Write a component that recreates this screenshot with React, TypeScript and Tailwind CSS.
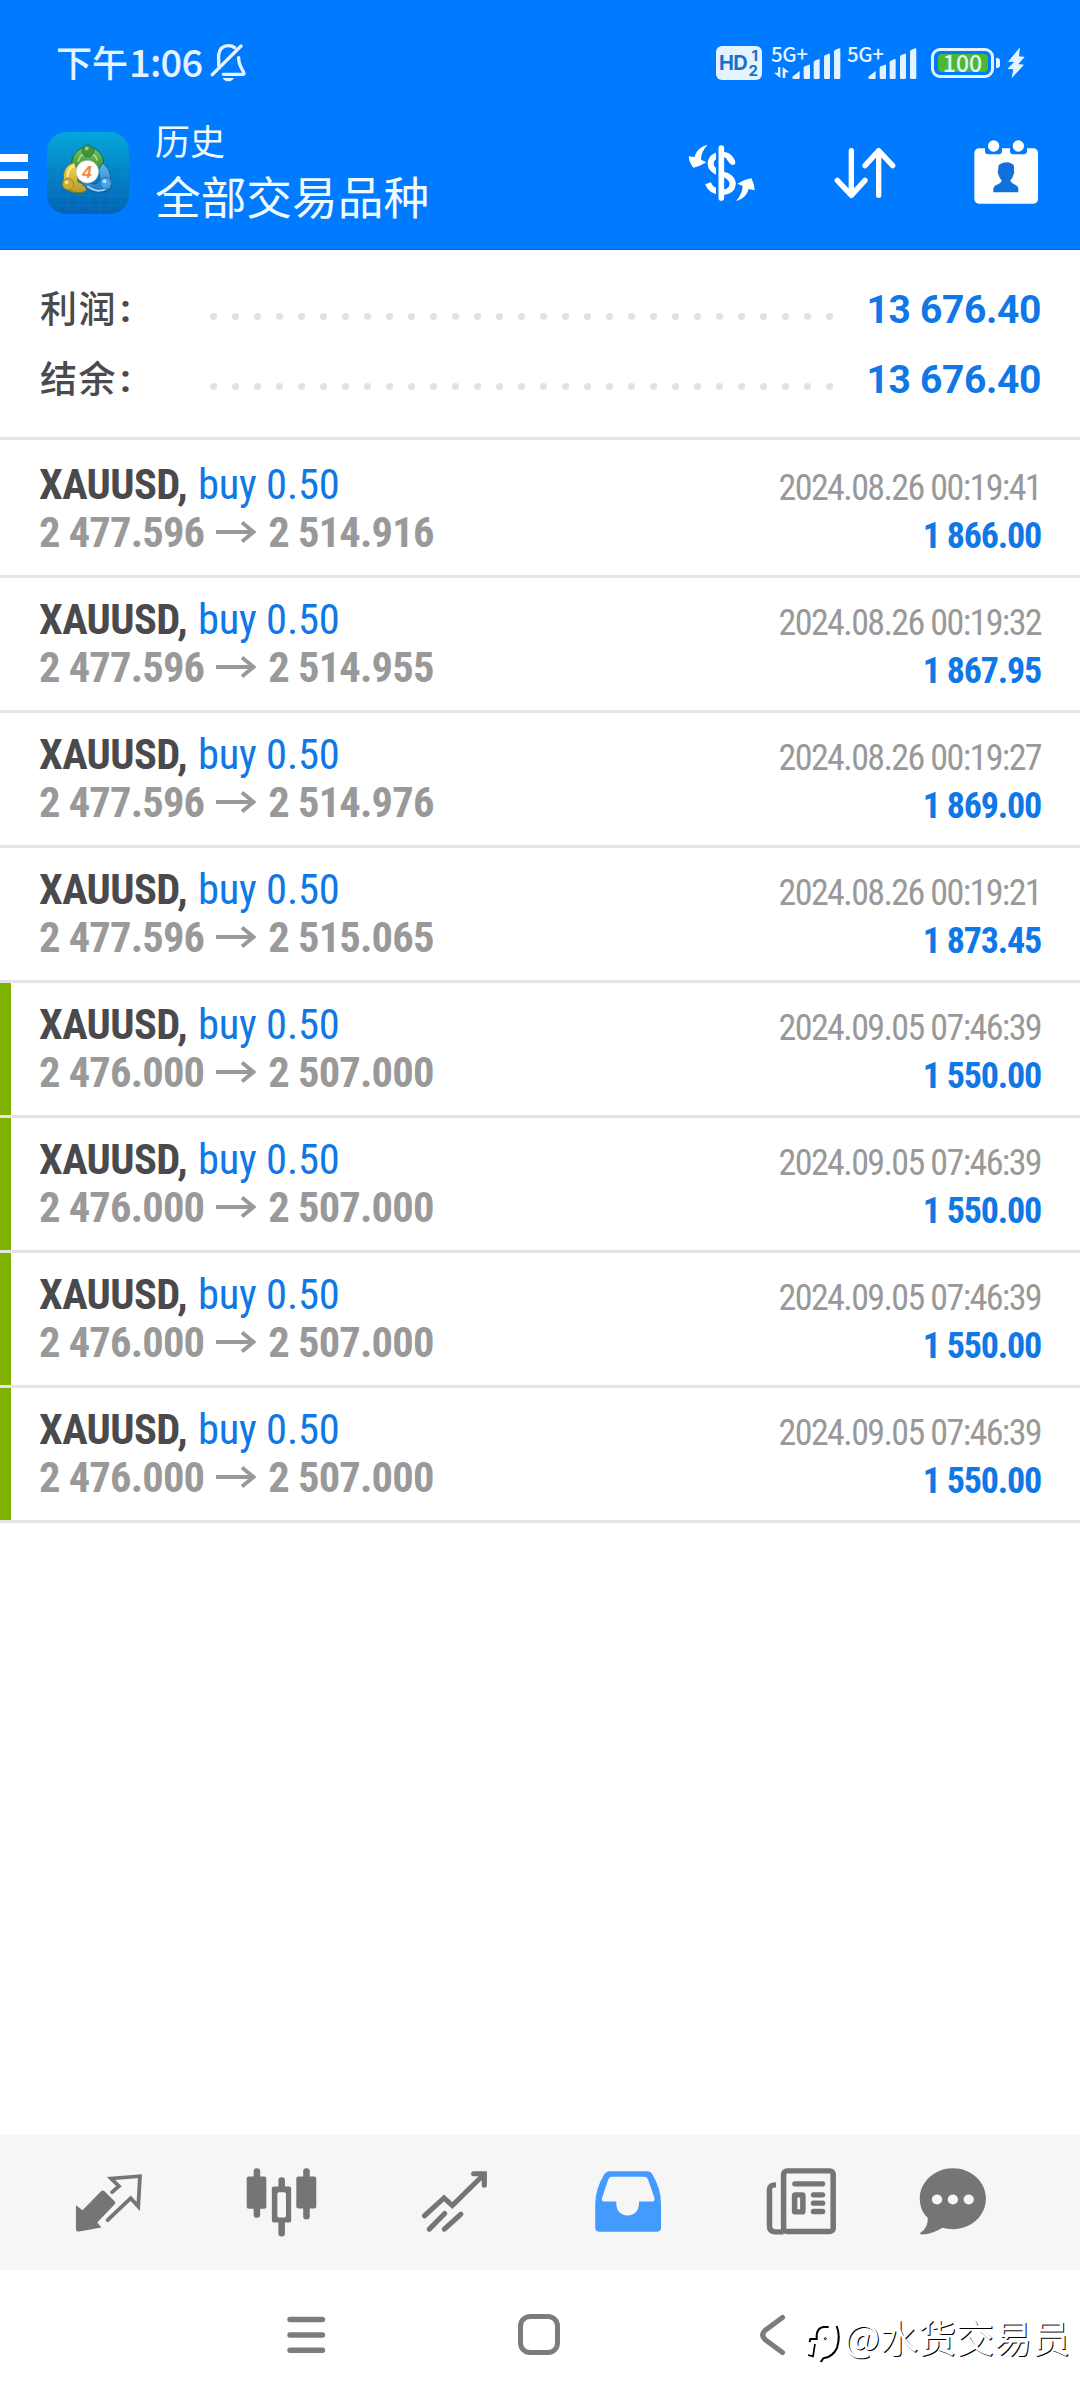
import React from 'react';

interface Deal {
  symbol: string;
  side: string;
  open: string;
  close: string;
  time: string;
  profit: string;
  marked?: boolean;
}

const deals: Deal[] = [
  { symbol: 'XAUUSD', side: 'buy 0.50', open: '2 477.596', close: '2 514.916', time: '2024.08.26 00:19:41', profit: '1 866.00' },
  { symbol: 'XAUUSD', side: 'buy 0.50', open: '2 477.596', close: '2 514.955', time: '2024.08.26 00:19:32', profit: '1 867.95' },
  { symbol: 'XAUUSD', side: 'buy 0.50', open: '2 477.596', close: '2 514.976', time: '2024.08.26 00:19:27', profit: '1 869.00' },
  { symbol: 'XAUUSD', side: 'buy 0.50', open: '2 477.596', close: '2 515.065', time: '2024.08.26 00:19:21', profit: '1 873.45' },
  { symbol: 'XAUUSD', side: 'buy 0.50', open: '2 476.000', close: '2 507.000', time: '2024.09.05 07:46:39', profit: '1 550.00', marked: true },
  { symbol: 'XAUUSD', side: 'buy 0.50', open: '2 476.000', close: '2 507.000', time: '2024.09.05 07:46:39', profit: '1 550.00', marked: true },
  { symbol: 'XAUUSD', side: 'buy 0.50', open: '2 476.000', close: '2 507.000', time: '2024.09.05 07:46:39', profit: '1 550.00', marked: true },
  { symbol: 'XAUUSD', side: 'buy 0.50', open: '2 476.000', close: '2 507.000', time: '2024.09.05 07:46:39', profit: '1 550.00', marked: true },
];

const BellOffIcon = () => (
  <svg className="w-[36px] h-[40px]" viewBox="630 72 108 120" fill="none" stroke="#e4f3ff" strokeWidth="10" strokeLinecap="round" strokeLinejoin="round">
    <path d="M656 140 C657 130 655 118 656 108 C659 88 670 80 685 80 C692 80 699 82 704 86" />
    <path d="M716 116 C715 136 724 146 731 160 C733 165 732 166 728 166 L670 166" />
    <path d="M723 81 L637 167" />
    <path d="M668 177 H702 C698 184 692 187 685 187 C678 187 672 184 668 177 Z" fill="#e4f3ff" stroke="none" />
  </svg>
);

const Signal = ({ data }: { data?: boolean }) => (
  <div className="relative w-[70px] h-[36px]">
    <span className="absolute left-0 -top-[4px] text-[20.5px] leading-[24px] tracking-[-0.4px] font-medium">5G+</span>
    <svg className="absolute inset-0" width="70" height="36" viewBox="335 75 210 108" fill="#e4f3ff">
      <path d="M399 170 L421 153 V173 Q421 177 417 177 H403 Q399 177 399 173 Z" />
      <path d="M433 143 Q433 140 436 139 L449 134 Q452 133 452 137 V173 Q452 177 448 177 H437 Q433 177 433 173 Z" />
      <path d="M463 127 Q463 124 466 122 L478 117 Q481 116 481 120 V173 Q481 177 477 177 H467 Q463 177 463 173 Z" />
      <path d="M494 111 Q494 107 497 106 L508 101 Q512 100 512 104 V173 Q512 177 508 177 H498 Q494 177 494 173 Z" />
      <path d="M524 96 Q524 92 527 90 L539 85 Q543 84 543 88 V173 Q543 177 539 177 H528 Q524 177 524 173 Z" />
      {data && <path d="M356 141 H363 V174 L344 158 H356 Z M370 174 V141 L390 157 H378 V174 Z" />}
    </svg>
  </div>
);

const StatusBar = () => (
  <div className="flex h-[126px] items-center pl-[56px] pr-[55px] text-[#e4f3ff] font-['Noto_Sans_CJK_SC',sans-serif]">
    <div className="-mt-[4px] flex items-center">
      <span className="text-[36px] leading-[40px] font-medium">下午</span>
      <span className="ml-[1px] text-[38px] leading-[40px] font-medium tracking-[-0.7px]">1:06</span>
    </div>
    <div className="ml-[7px]"><BellOffIcon /></div>
    <div className="ml-auto flex items-center">
      <div className="relative w-[46px] h-[34px] rounded-[6px] bg-[#e4f3ff] text-[#1a6fc8] font-['Inter',sans-serif] font-bold">
        <span className="absolute left-[3px] top-[7px] text-[20px] leading-[20px] tracking-[-0.8px]">HD</span>
        <span className="absolute right-[4px] top-[2px] text-[15px] leading-[16px]">1</span>
        <span className="absolute right-[4px] top-[17px] text-[15px] leading-[16px]">2</span>
      </div>
      <div className="ml-[9px]"><Signal data /></div>
      <div className="ml-[6px]"><Signal /></div>
      <div className="ml-[14px] flex h-[30px] w-[63px] items-center justify-center rounded-[9px] border-[3px] border-[#e4f3ff]">
        <div className="flex h-[18px] w-[50px] items-center justify-center rounded-[4px] bg-[#4cb82f]">
          <span className="-mt-[2px] text-[23px] leading-[18px] font-medium">100</span>
        </div>
      </div>
      <div className="ml-[2px] h-[10px] w-[4px] rounded-r-[3px] bg-[#e4f3ff]" />
      <svg className="ml-[7px] w-[18px] h-[32px]" viewBox="1041 82 54 96" fill="#e4f3ff">
        <path d="M1080 83 L1044 126 L1062 127 L1042 148 L1060 149 L1055 176 L1092 135 L1075 133 L1094 112 L1077 110 Z" />
      </svg>
    </div>
  </div>
);

const AppLogo = () => (
  <svg className="w-[82px] h-[82px]" viewBox="22 36 248 248">
    <defs>
      <linearGradient id="tile" x1="0" y1="0" x2="0" y2="1">
        <stop offset="0" stopColor="#04a7dc" />
        <stop offset="0.5" stopColor="#0482c6" />
        <stop offset="1" stopColor="#0463b4" />
      </linearGradient>
      <linearGradient id="green" x1="0" y1="0" x2="0" y2="1">
        <stop offset="0" stopColor="#7cc35c" />
        <stop offset="1" stopColor="#2c8a35" />
      </linearGradient>
      <linearGradient id="yellow" x1="0" y1="0" x2="0" y2="1">
        <stop offset="0" stopColor="#f3dc4e" />
        <stop offset="1" stopColor="#b8972a" />
      </linearGradient>
      <linearGradient id="sky" x1="0" y1="0" x2="0" y2="1">
        <stop offset="0" stopColor="#64b8ee" />
        <stop offset="1" stopColor="#1c78c4" />
      </linearGradient>
    </defs>
    <rect x="22" y="36" width="248" height="248" rx="58" fill="url(#tile)" />
    <path d="M55 40V280M87 38V282M119 36V284M151 36V284M183 36V284M215 38V282M246 46V272M24 68H268M22 100H270M22 132H270M22 164H270M22 196H270M22 228H270M28 258H264" stroke="#35b4dc" strokeOpacity="0.18" strokeWidth="2" />
    <path d="M98 140 A48 48 0 1 1 190 146 L178 162 L146 122 L112 146 Z" fill="url(#green)" stroke="#186a3c" strokeWidth="3" />
    <path d="M116 126 C120 108 130 100 146 100 C162 100 170 108 174 122" fill="none" stroke="#a6d98a" strokeWidth="5" />
    <path d="M106 128 C82 134 70 152 72 176 L68 196 C84 218 118 226 140 214 L144 196 L116 188 L112 150 Z" fill="url(#yellow)" stroke="#6d7a25" strokeWidth="3" />
    <path d="M84 172 C84 156 92 144 104 138" fill="none" stroke="#fbf0a0" strokeWidth="6" />
    <path d="M190 130 C208 144 216 160 214 184 L218 204 C200 224 156 226 132 196 L124 184 L150 188 C168 200 180 190 182 176 L178 150 Z" fill="url(#sky)" stroke="#135a9c" strokeWidth="3" />
    <path d="M144 200 C160 214 184 218 200 208" fill="none" stroke="#a9dcf8" strokeWidth="5" />
    <circle cx="146" cy="93" r="18" fill="#3f9440" stroke="#1d6a34" strokeWidth="2" />
    <circle cx="142" cy="86" r="6" fill="#9ccf86" />
    <circle cx="86" cy="194" r="17" fill="#c9ab35" stroke="#7d7428" strokeWidth="2" />
    <circle cx="81" cy="188" r="6" fill="#f6e789" />
    <circle cx="200" cy="191" r="17" fill="#4ca3e0" stroke="#16609f" strokeWidth="2" />
    <circle cx="196" cy="185" r="6" fill="#b4e0fa" />
    <circle cx="144" cy="156" r="34" fill="#fff" stroke="#c3cbb8" strokeWidth="2" />
    <text x="143" y="175" textAnchor="middle" fontFamily="Liberation Sans, sans-serif" fontStyle="italic" fontWeight="700" fontSize="52" fill="#f0894a">4</text>
  </svg>
);

const CurrencyIcon = () => (
  <svg className="w-[68px] h-[58px]" viewBox="85 372 204 174" fill="none">
    <path d="M144 375 C126 378 110 390 105 411 L87 409 Q88 428 101 443 Q120 440 140 427 L124 419 C124 402 131 388 144 375 Z" fill="#fff" />
    <path d="M229 543 C248 538 262 526 267 507 L285 511 Q284 490 275 475 Q255 478 233 491 L249 498 C248 516 241 530 229 543 Z" fill="#fff" />
    <path d="M218 427 C211 412 198 404 185 404 C166 404 153 416 153 431 C153 446 164 454 185 461 C208 468 219 478 219 491 C219 507 205 516 187 516 C166 516 151 507 145 490" stroke="#fff" strokeWidth="18" />
    <path d="M185 384 V534" stroke="#007aff" strokeWidth="32" />
    <path d="M194 404 C205 406 214 414 219 427 M185 461 C208 468 219 478 219 491 C219 507 205 516 194 516" stroke="#fff" strokeWidth="16" strokeLinecap="round" />
    <path d="M185 384 V534" stroke="#fff" strokeWidth="17" strokeLinecap="round" />
  </svg>
);

const SortIcon = () => (
  <svg className="w-[64px] h-[54px]" viewBox="519 378 192 162" fill="none" stroke="#fff" strokeWidth="16" strokeLinecap="round" strokeLinejoin="round">
    <path d="M574 392 V525 M532 481 L574 526 L615 481" />
    <path d="M656 526 V393 M615 437 L656 392 L698 437" />
  </svg>
);

const CalendarIcon = () => (
  <svg className="w-[66px] h-[66px]" viewBox="941 356 198 198">
    <rect x="945" y="384" width="191" height="166" rx="14" fill="#fff" />
    <path d="M977 380 H1028 V392 Q1028 402 1018 402 H987 Q977 402 977 392 Z M1052 380 H1103 V392 Q1103 402 1093 402 H1062 Q1052 402 1052 392 Z" fill="#007aff" />
    <circle cx="1003" cy="377" r="17" fill="#fff" />
    <circle cx="1077" cy="377" r="17" fill="#fff" />
    <path d="M1018 434 Q1028 426 1041 426 Q1060 427 1064 438 V452 Q1066 458 1062 464 Q1060 474 1053 480 Q1054 487 1062 490 Q1077 496 1077 506 V516 H1002 V506 Q1003 496 1017 491 Q1027 487 1027 480 Q1020 474 1018 464 Q1014 459 1016 452 Z" fill="#1070dc" />
  </svg>
);

const AppBar = () => (
  <div className="flex h-[94px] items-center font-['Noto_Sans_CJK_SC',sans-serif] text-[#f0fbff]">
    <div className="mt-[4px] flex flex-col gap-[9px]">
      <div className="h-[8px] w-[28px] bg-white" />
      <div className="h-[8px] w-[28px] bg-white" />
      <div className="h-[8px] w-[28px] bg-white" />
    </div>
    <div className="ml-[19px]"><AppLogo /></div>
    <div className="-mt-[7px] ml-[26px]">
      <div className="text-[35px] leading-[44px]">历史</div>
      <div className="mt-[6px] text-[45.7px] leading-[54px]">全部交易品种</div>
    </div>
    <div className="ml-auto flex items-center pr-[41px]">
      <CurrencyIcon />
      <div className="ml-[77px]"><SortIcon /></div>
      <div className="-mt-[2px] ml-[76px]"><CalendarIcon /></div>
    </div>
  </div>
);

const SummaryRow = ({ label, value }: { label: string; value: string }) => (
  <div className="flex h-[70px] items-center pl-[40px] pr-[39px]">
    <div className="flex w-[170px] items-center font-medium text-[#4a4a4d]">
      <span className="-mt-[4px] text-[37px] leading-[40px] tracking-[1.5px] font-['Noto_Sans_CJK_SC',sans-serif]">{label}</span>
      <span className="ml-[3px] text-[39px] leading-[46px] font-bold">:</span>
    </div>
    <div className="mt-[14px] flex w-[623px] justify-between">
      {Array.from({ length: 29 }, (_, i) => (
        <span key={i} className="h-[7px] w-[7px] rounded-full bg-[#e2e2e4]" />
      ))}
    </div>
    <div className="mt-[1px] ml-auto text-[39px] leading-[46px] font-bold tracking-[-0.35px] text-[#0f77e6]">{value}</div>
  </div>
);

const ArrowIcon = () => (
  <svg className="mx-[12px] -mt-[2px] w-[40px] h-[22px]" viewBox="0 0 40 22" fill="none" stroke="#999" strokeWidth="3.8">
    <path d="M0 11 H37" />
    <path d="M26 1.5 L37.5 11 L26 20.5" />
  </svg>
);

const DealRow = ({ deal }: { deal: Deal }) => (
  <div>
    <div className="flex h-[132px]">
      <div className={deal.marked ? 'w-[11px] bg-[#7fb100]' : 'w-[11px]'} />
      <div className="flex flex-1 justify-between pl-[28px] pr-[39px] font-['Roboto_Condensed',sans-serif]">
        <div className="pt-[18px] text-[42.5px] leading-[48px]">
          <div>
            <span className="font-bold tracking-[-0.6px] text-[#4a4a4d]">{deal.symbol},</span>
            <span className="ml-[11px] tracking-[-0.2px] text-[#0f77e6]">{deal.side}</span>
          </div>
          <div className="flex items-center font-bold tracking-[-0.8px] text-[#999]">
            <span>{deal.open}</span>
            <ArrowIcon />
            <span>{deal.close}</span>
          </div>
        </div>
        <div className="pt-[21px] text-right text-[36px] leading-[48px]">
          <div className="tracking-[-1.6px] text-[#999]">{deal.time}</div>
          <div className="font-bold tracking-[-1.2px] text-[#0f77e6]">{deal.profit}</div>
        </div>
      </div>
    </div>
    <div className="h-[3px] bg-[#e4e4e6]" />
  </div>
);

const TradeIcon = () => (
  <svg className="w-[80px] h-[80px]" viewBox="198.9 127.5 232.3 240" preserveAspectRatio="none">
    <path d="M219 254 L238 269 L292 212 Q297 208 302 212 L332 243 Q336 248 331 252 L281 306 L293 321 L228 333 Q219 333 219 326 Z" fill="#757575" />
    <path d="M324 215 L344 197 L321 174 L405 167 L400 258 L378 233 L311 299" fill="none" stroke="#757575" strokeWidth="11" strokeLinecap="round" />
  </svg>
);

const CandlesIcon = () => (
  <svg className="w-[80px] h-[80px]" viewBox="701.3 127.5 232.3 240" preserveAspectRatio="none">
    <g fill="#757575">
      <rect x="715" y="168" width="57" height="97" rx="6" />
      <rect x="735" y="143" width="19" height="149" rx="9" />
      <rect x="859" y="168" width="58" height="96" rx="6" />
      <rect x="879" y="143" width="19" height="154" rx="9" />
      <rect x="788" y="198" width="56" height="108" rx="6" />
      <rect x="807" y="170" width="19" height="178" rx="9" />
    </g>
    <rect x="804" y="215" width="25" height="76" rx="5" fill="#f6f6f6" />
  </svg>
);

const TrendIcon = () => (
  <svg className="w-[80px] h-[80px]" viewBox="1203.7 127.5 232.3 240" preserveAspectRatio="none" fill="none" stroke="#757575" strokeWidth="15" strokeLinecap="round">
    <path d="M1231 286 L1288 232 L1312 255 L1400 166" />
    <path d="M1374 160 H1405 V194" />
    <path d="M1290 279 L1245 326 M1337 281 L1289 326" />
  </svg>
);

const InboxIcon = () => (
  <svg className="w-[80px] h-[80px]" viewBox="138 127.5 232.3 240" preserveAspectRatio="none">
    <path d="M200 152 H312 Q320 152 324 160 Q350 204 350 250 V321 Q350 334 337 334 H171 Q159 334 159 321 V250 Q160 204 186 160 Q192 152 200 152 Z" fill="#449bff" />
    <path d="M208 169 H300 Q309 169 312 176 L331 232 Q333 243 324 243 H286 V250 Q284 284 253 285 Q222 284 220 250 V243 H185 Q175 243 179 232 Q188 204 197 176 Q200 169 208 169 Z" fill="#f6f6f6" />
  </svg>
);

const NewsIcon = () => (
  <svg className="w-[80px] h-[80px]" viewBox="640.4 127.5 232.3 240" preserveAspectRatio="none" fill="none" stroke="#757575" strokeWidth="16" strokeLinecap="round">
    <rect x="706" y="151" width="144" height="182" rx="10" />
    <path d="M684 193 Q665 192 665 207 V316 Q665 334 682 334 H706" strokeLinecap="butt" />
    <path d="M739 190 H819 M793 223 H819 M793 248 H819 M793 273 H819" />
    <rect x="738" y="223" width="24" height="51" rx="2" />
  </svg>
);

const ChatIcon = () => (
  <svg className="w-[80px] h-[80px]" viewBox="1083.2 127.5 232.3 240" preserveAspectRatio="none">
    <path d="M1199 143 C1253 143 1295 184 1295 234 C1295 286 1252 326 1199 326 Q1182 326 1169 322 Q1138 341 1110 342 Q1101 342 1105 337 Q1128 321 1126 292 C1111 278 1103 258 1103 234 C1103 184 1146 143 1199 143 Z" fill="#757575" />
    <circle cx="1153" cy="237" r="15" fill="#f6f6f6" />
    <circle cx="1199" cy="237" r="15" fill="#f6f6f6" />
    <circle cx="1245" cy="237" r="15" fill="#f6f6f6" />
  </svg>
);

const TabBar = () => (
  <div className="flex h-[135px] items-center bg-[#f6f6f6] pl-[22px]">
    {[TradeIcon, CandlesIcon, TrendIcon, InboxIcon, NewsIcon].map((Icon, i) => (
      <div key={i} className="flex w-[173px] justify-center"><Icon /></div>
    ))}
    <div className="flex w-[132px] justify-center"><ChatIcon /></div>
  </div>
);

const SystemNav = () => (
  <div className="relative flex h-[130px] items-start pt-[40px]">
    <svg className="ml-[286px] mt-[5px] w-[40px] h-[40px]" viewBox="0 0 40 40" stroke="#7c7c7c" strokeWidth="5.4" strokeLinecap="round">
      <path d="M4 4.5 H36.5 M4 20 H36.5 M4 35.3 H36.5" />
    </svg>
    <div className="ml-[192px] mt-[4px] h-[41px] w-[42px] rounded-[12px] border-[5.5px] border-[#7c7c7c]" />
    <svg className="ml-[199px] mt-[4px] w-[28px] h-[42px]" viewBox="0 0 28 42" fill="none" stroke="#7c7c7c" strokeWidth="5.2" strokeLinecap="round">
      <path d="M23.5 3.5 L6 16.5 Q1.5 21 6 25.5 L23.5 38.5" />
    </svg>
    <div className="absolute left-[806px] top-[42px] flex items-start">
      <svg className="mt-[12px] w-[36px] h-[42px]" viewBox="200 104 108 126" fill="none" stroke="#000">
        <path d="M268 113 H252 Q234 116 232 138 V149 H213 L211 158" strokeWidth="6" />
        <path d="M227 164 L221 201 L206 197" strokeWidth="5" />
        <path d="M292 110 Q304 140 293 176 Q280 203 252 207 L244 218" strokeWidth="6" />
        <circle cx="258" cy="148" r="3" strokeWidth="3" />
      </svg>
      <span className="ml-[2px] whitespace-nowrap text-[38px] leading-[48px] text-white [text-shadow:1px_1px_0_#000] font-['Noto_Sans_CJK_SC',sans-serif]">@水货交易员</span>
    </div>
  </div>
);

export default function App() {
  return (
    <div className="flex h-[2400px] w-[1080px] flex-col overflow-hidden bg-white font-['Roboto',sans-serif]">
      <header className="h-[250px] border-b border-[#1a63b8] bg-[#007aff]">
        <StatusBar />
        <AppBar />
      </header>
      <section className="h-[187px] pt-[24px]">
        <SummaryRow label="利润" value="13 676.40" />
        <SummaryRow label="结余" value="13 676.40" />
      </section>
      <main className="flex-1">
        <div className="mb-[3px] h-[3px] bg-[#e4e4e6]" />
        {deals.map((deal, i) => (
          <DealRow key={i} deal={deal} />
        ))}
      </main>
      <TabBar />
      <SystemNav />
    </div>
  );
}
